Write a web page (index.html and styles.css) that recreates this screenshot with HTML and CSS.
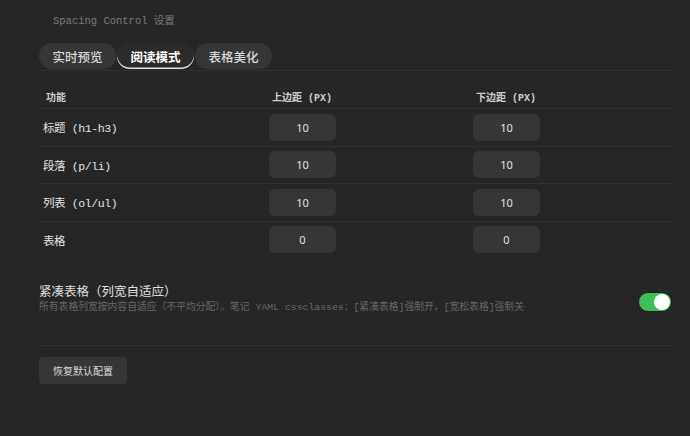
FILE: index.html
```html
<!DOCTYPE html>
<html lang="zh-CN">
<head>
    <meta charset="UTF-8" />
    <meta name="viewport" content="width=device-width, initial-scale=1.0" />
    <title>Spacing Control 设置</title>
    <link rel="stylesheet" href="styles.css">
</head>
<body>
    <div class="settings">
        <div class="settings__title">Spacing Control 设置</div>

        <div class="settings-tabs">
            <button class="settings-tabs__item">实时预览</button>
            <button class="settings-tabs__item settings-tabs__item--active">阅读模式</button>
            <button class="settings-tabs__item">表格美化</button>
        </div>

        <div class="spacing-table">
            <div class="spacing-table__head">
                <div>功能</div>
                <div>上边距 (px)</div>
                <div>下边距 (px)</div>
            </div>
            <div class="spacing-table__row">
                <div class="spacing-table__label">标题 (h1-h3)</div>
                <div class="spacing-table__cell"><input class="spacing-input" value="10" /></div>
                <div class="spacing-table__cell"><input class="spacing-input" value="10" /></div>
            </div>
            <div class="spacing-table__row">
                <div class="spacing-table__label">段落 (p/li)</div>
                <div class="spacing-table__cell"><input class="spacing-input" value="10" /></div>
                <div class="spacing-table__cell"><input class="spacing-input" value="10" /></div>
            </div>
            <div class="spacing-table__row">
                <div class="spacing-table__label">列表 (ol/ul)</div>
                <div class="spacing-table__cell"><input class="spacing-input" value="10" /></div>
                <div class="spacing-table__cell"><input class="spacing-input" value="10" /></div>
            </div>
            <div class="spacing-table__row">
                <div class="spacing-table__label">表格</div>
                <div class="spacing-table__cell"><input class="spacing-input" value="0" /></div>
                <div class="spacing-table__cell"><input class="spacing-input" value="0" /></div>
            </div>
        </div>

        <div class="setting-item">
            <div class="setting-item__info">
                <div class="setting-item__name">紧凑表格（列宽自适应）</div>
                <div class="setting-item__desc">所有表格列宽按内容自适应（不平均分配）。笔记 YAML cssclasses：[紧凑表格]强制开，[宽松表格]强制关</div>
            </div>
            <label class="toggle">
                <input type="checkbox" checked />
                <span class="toggle__knob"></span>
            </label>
        </div>

        <div class="settings__footer">
            <button class="settings__reset">恢复默认配置</button>
        </div>
    </div>
</body>
</html>
```

FILE: styles.css
```css
/* General styles */
body {
  margin: 0;
  background: #262626;
  color: #dcdcdc;
  font-family: "Noto Sans CJK SC", "Noto Sans", sans-serif;
}

.settings {
  padding: 14px 18px 0 39px;
}

.settings__title {
  padding-left: 14px;
  font-family: "Liberation Mono", "Noto Sans CJK SC", monospace;
  font-size: 10.5px;
  line-height: 15px;
  color: #7a7a7a;
}

/* Tabs */
.settings-tabs {
  display: flex;
  gap: 1px;
  margin-top: 14px;
  padding-bottom: 1px;
  border-bottom: 1px solid #303030;
}

.settings-tabs__item {
  height: 26px;
  padding: 0 13.5px;
  border: 0;
  border-radius: 13px;
  background: #363636;
  color: #d8d8d8;
  font-family: inherit;
  font-size: 12.5px;
  font-weight: 500;
  cursor: pointer;
}

.settings-tabs__item--active {
  background: #2b2b2b;
  color: #fff;
  font-weight: 700;
  box-shadow: inset 0 -1.5px 0 #e6e6e6;
}

/* Spacing table */
.spacing-table {
  margin-top: 14px;
}

.spacing-table__head,
.spacing-table__row {
  display: grid;
  grid-template-columns: 226px 204px 1fr;
  align-items: center;
}

.spacing-table__head {
  height: 23px;
  font-family: "Liberation Mono", "Noto Sans CJK SC", monospace;
  font-size: 10px;
  font-weight: 700;
  color: #cfcfcf;
  text-transform: uppercase;
}

.spacing-table__head div {
  padding-left: 7px;
}

.spacing-table__row {
  height: 37.5px;
  box-sizing: border-box;
  border-top: 1px solid #313131;
}

.spacing-table__label {
  padding-left: 4px;
  font-family: "Liberation Mono", "Noto Sans CJK SC", monospace;
  font-size: 11.5px;
  letter-spacing: -0.4px;
  color: #e4e4e4;
}

.spacing-table__cell {
  padding-left: 4px;
}

.spacing-input {
  display: block;
  width: 67px;
  height: 27px;
  box-sizing: border-box;
  border: 0;
  outline: 0;
  border-radius: 6px;
  background: #363636;
  color: #e2e2e2;
  font-family: "Noto Sans", sans-serif;
  font-size: 11px;
  text-align: center;
}

/* Toggle setting */
.setting-item {
  display: flex;
  justify-content: space-between;
  align-items: flex-start;
  margin-top: 24px;
}

.setting-item__name {
  font-size: 12.5px;
  line-height: 17px;
  color: #e0e0e0;
}

.setting-item__desc {
  margin-top: 2px;
  font-family: "Liberation Mono", "Noto Sans CJK SC", monospace;
  font-size: 9.8px;
  line-height: 14px;
  color: #686868;
}

.toggle {
  position: relative;
  display: block;
  width: 34px;
  height: 20px;
  margin-top: 10px;
  flex-shrink: 0;
}

.toggle input {
  display: none;
}

.toggle__knob {
  display: block;
  width: 100%;
  height: 100%;
  box-sizing: border-box;
  border-radius: 10px;
  background: #3fbe58;
  border: 1px solid #1e1e1e;
}

.toggle__knob::after {
  content: "";
  position: absolute;
  top: 2px;
  right: 2px;
  width: 16px;
  height: 16px;
  border-radius: 50%;
  background: #fff;
}

/* Footer */
.settings__footer {
  margin-top: 30px;
  padding-top: 10px;
  border-top: 1px solid #303030;
}

.settings__reset {
  height: 27px;
  padding: 0 14px;
  border: 0;
  border-radius: 4px;
  background: #363636;
  color: #dcdcdc;
  font-family: inherit;
  font-size: 10px;
  cursor: pointer;
}
```
